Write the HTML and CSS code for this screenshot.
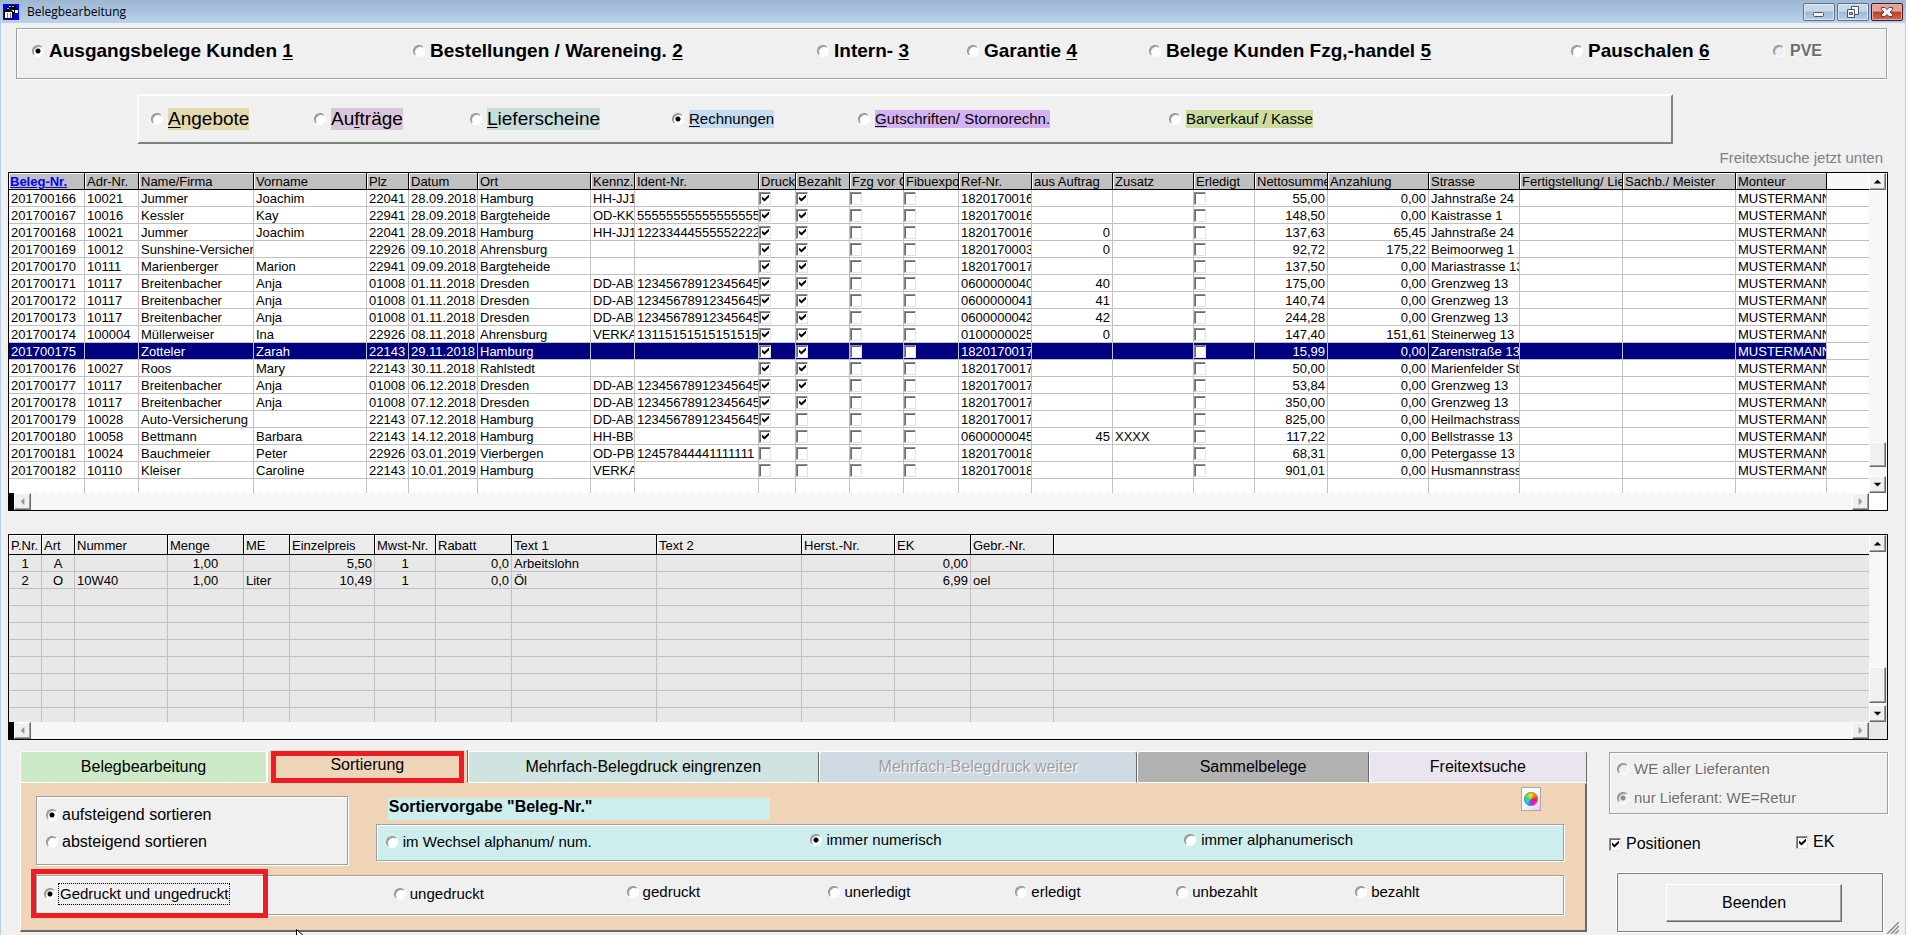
FILE: index.html
```html
<!DOCTYPE html>
<html lang="de">
<head>
<meta charset="utf-8">
<title>Belegbearbeitung</title>
<link rel="stylesheet" href="styles.css">
</head>
<body>
<div class="window">
  <header class="titlebar">
    <svg class="app-icon" viewBox="0 0 16 16" shape-rendering="crispEdges" aria-hidden="true">
      <rect width="16" height="16" fill="#0000ff"/>
      <path d="M4 2h2V1h6v1h1v2h2v2H9V5H6v2H2V4h2z" fill="#000"/>
      <path d="M6 2h2v1H6zM9 2h2v1H9zM4 4h2v1H4z" fill="#b0b0b0"/>
      <path d="M8 6h6v4H8z" fill="#000"/>
      <path d="M9 6h2v2H9zM12 6h3v3h-3z" fill="#fff"/>
      <path d="M1 7h9v8H1z" fill="#000"/>
      <path d="M2 8h7v6H2z" fill="#fff"/>
      <path d="M4 9h1v5H4zM7 9h1v5H7z" fill="#808080"/>
    </svg>
    <h1 class="title">Belegbearbeitung</h1>
    <div class="window-buttons">
      <button type="button" class="win-btn" aria-label="Minimieren">
        <svg viewBox="0 0 32 18"><rect x="10.500" y="9.500" width="10" height="4" rx="1" fill="#f4f4f4" stroke="#4e5666"/></svg>
      </button>
      <button type="button" class="win-btn" aria-label="Wiederherstellen">
        <svg viewBox="0 0 32 18"><path d="M14.500 3.500h7v8h-7z" fill="#f4f4f4" stroke="#4e5666"/><path d="M10.500 6.500h7v8h-7z" fill="#f4f4f4" stroke="#4e5666"/><path d="M12.500 9.500h3v2h-3z" fill="#9db8d4" stroke="#4e5666"/></svg>
      </button>
      <button type="button" class="win-btn win-close" aria-label="Schließen">
        <svg viewBox="0 0 32 18"><path d="M10.500 4.500h3.500l2 2 2-2h3.500v2L19 9l2.500 2.500v2H18l-2-2-2 2h-3.500v-2L13 9l-2.500-2.500z" fill="#f4f4f4" stroke="#5a4048"/></svg>
      </button>
    </div>
  </header>

  <fieldset class="etched kinds">
    <label class="opt"><input type="radio" name="kind" checked><span>Ausgangsbelege Kunden <u>1</u></span></label>
    <label class="opt"><input type="radio" name="kind"><span>Bestellungen / Wareneing. <u>2</u></span></label>
    <label class="opt"><input type="radio" name="kind"><span>Intern- <u>3</u></span></label>
    <label class="opt"><input type="radio" name="kind"><span>Garantie <u>4</u></span></label>
    <label class="opt"><input type="radio" name="kind"><span>Belege Kunden Fzg,-handel <u>5</u></span></label>
    <label class="opt"><input type="radio" name="kind"><span>Pauschalen <u>6</u></span></label>
    <label class="opt small off"><input type="radio" name="kind" disabled><span>PVE</span></label>
  </fieldset>

  <fieldset class="docs">
    <label class="opt big"><input type="radio" name="doc"><span class="tint-sand"><u>A</u>ngebote</span></label>
    <label class="opt big"><input type="radio" name="doc"><span class="tint-mauve">Au<u>f</u>träge</span></label>
    <label class="opt big"><input type="radio" name="doc"><span class="tint-teal"><u>L</u>ieferscheine</span></label>
    <label class="opt"><input type="radio" name="doc" checked><span class="tint-blue"><u>R</u>echnungen</span></label>
    <label class="opt"><input type="radio" name="doc"><span class="tint-violet"><u>G</u>utschriften/ Stornorechn.</span></label>
    <label class="opt"><input type="radio" name="doc"><span class="tint-green">Barverkauf / Kasse</span></label>
  </fieldset>

  <p class="hint">Freitextsuche jetzt unten</p>

  <section class="grid grid-docs" aria-label="Belege">
    <div class="grid-view"><table id="docs-table"></table></div>
    <div class="vscroll">
      <button type="button" class="arrow" aria-label="Nach oben"><svg viewBox="0 0 16 16"><path d="M4 10h8L8 6z"/></svg></button>
      <span class="track"></span><span class="thumb"></span><span class="track-end"></span>
      <button type="button" class="arrow" aria-label="Nach unten"><svg viewBox="0 0 16 16"><path d="M4 6h8l-4 4z"/></svg></button>
    </div>
    <div class="hscroll">
      <button type="button" class="arrow" aria-label="Nach links" disabled><svg viewBox="0 0 16 16"><path d="M10 4v8L6 8z"/></svg></button>
      <span class="track"></span>
      <button type="button" class="arrow" aria-label="Nach rechts" disabled><svg viewBox="0 0 16 16"><path d="M6 4v8l4-4z"/></svg></button>
    </div>
  </section>

  <section class="grid grid-items" aria-label="Positionen">
    <div class="grid-view"><table id="items-table"></table></div>
    <div class="vscroll">
      <button type="button" class="arrow" aria-label="Nach oben"><svg viewBox="0 0 16 16"><path d="M4 10h8L8 6z"/></svg></button>
      <span class="track"></span><span class="thumb"></span><span class="track-end"></span>
      <button type="button" class="arrow" aria-label="Nach unten"><svg viewBox="0 0 16 16"><path d="M4 6h8l-4 4z"/></svg></button>
    </div>
    <div class="hscroll">
      <button type="button" class="arrow" aria-label="Nach links" disabled><svg viewBox="0 0 16 16"><path d="M10 4v8L6 8z"/></svg></button>
      <span class="track"></span>
      <button type="button" class="arrow" aria-label="Nach rechts" disabled><svg viewBox="0 0 16 16"><path d="M6 4v8l4-4z"/></svg></button>
    </div>
  </section>

  <footer class="bottom">
    <section class="tabs">
      <div class="tab-row" role="tablist">
        <button type="button" role="tab" class="tab tab-edit">Belegbearbeitung</button>
        <button type="button" role="tab" class="tab tab-sort" aria-selected="true">Sortierung</button>
        <button type="button" role="tab" class="tab tab-limit">Mehrfach-Belegdruck eingrenzen</button>
        <button type="button" role="tab" class="tab tab-next" disabled>Mehrfach-Belegdruck weiter</button>
        <button type="button" role="tab" class="tab tab-collect">Sammelbelege</button>
        <button type="button" role="tab" class="tab tab-search">Freitextsuche</button>
      </div>
      <div class="tab-body" role="tabpanel">
        <div class="sort-area">
          <fieldset class="etched direction">
            <label class="opt"><input type="radio" name="dir" checked><span>aufsteigend sortieren</span></label>
            <label class="opt"><input type="radio" name="dir"><span>absteigend sortieren</span></label>
          </fieldset>
          <div class="preset">
            <div class="preset-head">
              <h2 class="preset-title">Sortiervorgabe "Beleg-Nr."</h2>
              <button type="button" class="color-btn" aria-label="Farbe wählen"><span class="wheel"></span></button>
            </div>
            <fieldset class="etched modes">
              <label class="opt low"><input type="radio" name="mode"><span>im Wechsel alphanum/ num.</span></label>
              <label class="opt"><input type="radio" name="mode" checked><span>immer numerisch</span></label>
              <label class="opt"><input type="radio" name="mode"><span>immer alphanumerisch</span></label>
            </fieldset>
          </div>
        </div>
        <fieldset class="etched states">
          <label class="opt low focus"><input type="radio" name="state" checked><span>Gedruckt und ungedruckt</span></label>
          <label class="opt low"><input type="radio" name="state"><span>ungedruckt</span></label>
          <label class="opt"><input type="radio" name="state"><span>gedruckt</span></label>
          <label class="opt"><input type="radio" name="state"><span>unerledigt</span></label>
          <label class="opt"><input type="radio" name="state"><span>erledigt</span></label>
          <label class="opt"><input type="radio" name="state"><span>unbezahlt</span></label>
          <label class="opt"><input type="radio" name="state"><span>bezahlt</span></label>
        </fieldset>
      </div>
      <svg class="pointer" viewBox="0 0 12 19" aria-hidden="true"><path d="M.5 .5v15l4-4 3 6 2-1-3-6h5z" fill="#fff" stroke="#000"/></svg>
    </section>

    <aside class="side">
      <fieldset class="etched suppliers">
        <label class="opt off"><input type="radio" name="sup" disabled><span>WE aller Lieferanten</span></label>
        <label class="opt off"><input type="radio" name="sup" disabled checked><span>nur Lieferant: WE=Retur</span></label>
      </fieldset>
      <div class="checks">
        <label class="opt"><input type="checkbox" checked><span>Positionen</span></label>
        <label class="opt high"><input type="checkbox" checked><span>EK</span></label>
      </div>
      <div class="exit"><button type="button" class="exit-btn">Beenden</button></div>
    </aside>
  </footer>
  <svg class="grip" viewBox="0 0 12 12" aria-hidden="true"><path d="M0 12L12 0M4 12l8-8M8 12l4-4" stroke="#8c8c8c" stroke-width="1.500"/></svg>
</div>
<script src="tables.js"></script>
</body>
</html>
```

FILE: styles.css
```css
*, *::before, *::after { box-sizing: border-box; }

body {
  margin: 0;
  background: #f0f0f0;
  color: #000;
  font: 16px/18px "Liberation Sans", Arial, sans-serif;
}

.window {
  position: relative;
  min-height: 100vh;
  overflow: hidden;
  box-shadow: inset 1px 0 #b4cfec, inset -1px 0 #b4cfec;
}

fieldset { margin: 0; padding: 0; border: 0; min-width: 0; }
h1, h2, p { margin: 0; font-weight: normal; }
button { font: inherit; color: inherit; padding: 0; }
svg { display: block; }
u { text-underline-offset: 2px; }

/* title bar */
.titlebar {
  display: flex;
  align-items: center;
  height: 23px;
  padding: 0 3px;
  background: linear-gradient(#9db7d3, #b8d2ec);
}
.app-icon { width: 16px; height: 16px; margin-right: 8px; }
.title { flex: 1; font: 12px/16px "Open Sans", "Noto Sans", sans-serif; }
.window-buttons { display: flex; gap: 2px; }
.win-btn {
  width: 32px;
  height: 18px;
  border: 1px solid #5b7188;
  border-radius: 2px;
  background: linear-gradient(#c6d8ea 45%, #9fb9d4 50%, #b5cee8);
  box-shadow: inset 0 0 0 1px #dce8f4;
}
.win-btn svg { margin: -1px; width: 32px; height: 18px; }
.win-close {
  border-color: #43141a;
  background: linear-gradient(#e2a294 45%, #c03a24 50%, #cf6a50);
  box-shadow: inset 0 0 0 1px #e8b0a4;
}

/* radio and check boxes */
.opt { display: flex; align-items: center; gap: 5px; white-space: nowrap; }
.opt.off { color: #6d6d6d; text-shadow: 1px 1px #fff; }
input[type="radio"] {
  appearance: none;
  flex: none;
  width: 12px;
  height: 12px;
  margin: 0;
  border: 1px solid;
  border-color: #8c8c8c #fff #fff #8c8c8c;
  border-radius: 50%;
  background: #fff;
  box-shadow: inset 1px 1px #9a9a9a;
}
input[type="radio"]:checked { background: radial-gradient(circle, #000 2px, #fff 3px); }
input[type="radio"]:disabled { background: #f0f0f0; }
input[type="radio"]:disabled:checked { background: radial-gradient(circle, #8c8c8c 2px, #f0f0f0 3px); }

input[type="checkbox"] {
  appearance: none;
  display: block;
  flex: none;
  width: 12px;
  height: 13px;
  margin: 0;
  border: 1px solid;
  border-color: #8c8c8c #e3e3e3 #e3e3e3 #8c8c8c;
  background: #fff;
  box-shadow: inset 1px 1px #696969;
}
input[type="checkbox"]:checked::before {
  content: "";
  display: block;
  width: 7px;
  height: 7px;
  margin: 2px 0 0 2px;
  background: #000;
  clip-path: polygon(0 30%, 35% 62%, 100% 0, 100% 38%, 35% 100%, 0 68%);
}

.etched {
  border: 1px solid #a0a0a0;
  box-shadow: 1px 1px #fff, inset 1px 1px #fff;
}

/* document kinds */
.kinds {
  display: grid;
  grid-template-columns: 381fr 404fr 150fr 182fr 422fr 202fr 113fr;
  align-items: center;
  height: 51px;
  margin: 5px 19px 0 16px;
  padding: 0 0 5px 15px;
  font-size: 19px;
  line-height: 22px;
  font-weight: bold;
}
.kinds .small { font-size: 16px; }

.docs {
  display: grid;
  grid-template-columns: 163fr 156fr 202fr 186fr 311fr 502fr;
  align-items: center;
  height: 50px;
  margin: 15px 233px 0 137px;
  padding: 0 0 0 12px;
  border: 2px solid;
  border-color: #fff #808080 #808080 #fff;
  font-size: 15px;
}
.docs .big { font-size: 19px; line-height: 22px; }
.tint-sand { background: #e4dab0; }
.tint-mauve { background: #dac6dc; }
.tint-teal { background: #c8dcda; }
.tint-blue { background: #c4dbf0; }
.tint-violet { background: #d2b2f4; }
.tint-green { background: #cbdc9c; }

.hint {
  padding-right: 23px;
  color: #808080;
  font-size: 15px;
  line-height: 28px;
  text-align: right;
}

/* data grids */
.grid {
  display: grid;
  grid-template-columns: 1fr 18px;
  grid-template-rows: auto 17px;
  margin: 0 18px 23px 8px;
  border: 1px solid #000;
  font-size: 13px;
  line-height: 14px;
}
.grid-view { overflow: hidden; }
.grid table { width: 100%; table-layout: fixed; border-spacing: 0; border-collapse: separate; }
.grid th, .grid td {
  height: 17px;
  padding: 2px 2px 0;
  overflow: hidden;
  white-space: nowrap;
  text-align: left;
  font-weight: normal;
  border: 0 solid #c0c0c0;
  border-width: 0 1px 1px 0;
}
.grid th { border-color: #000; box-shadow: inset 1px 1px #fff; }
.grid th:last-child, .grid td:last-child { border-right: 0; }
.grid .num { text-align: right; }
.grid .mid { text-align: center; }
.grid td.box { padding: 0; }
.grid th.sorted { padding-left: 1px; font-weight: bold; color: #0000ff; text-decoration: underline; }

.grid-docs { background: #fff; }
.grid-docs .grid-view { height: 320px; }
.grid-docs th { background: #c0c0c0; }
.grid-docs th:last-child { background: #f8f8f8; }
.grid-docs tr.selected td:not(:last-child) { background: #000080; color: #fff; }

.grid-items { background: #e8e8e8; margin-bottom: 9px; }
.grid-items .grid-view { height: 187px; }
.grid-items th { height: 20px; padding-top: 3px; background: #ebebeb; }
.grid-items th:last-child { background: #f0f0f0; }

.track, .track-end {
  background: repeating-conic-gradient(#fff 0 25%, #f0f0f0 0 50%) 0 0 / 2px 2px;
}
.track { flex: 1; }
.track-end { height: 9px; }
.grid-items .track-end { height: 2px; }
.vscroll { display: flex; flex-direction: column; padding-right: 1px; }
.hscroll { display: flex; border-left: 5px solid #000; }
.arrow, .thumb {
  border: 1px solid;
  border-color: #fff #696969 #696969 #fff;
  background: #f0f0f0;
  box-shadow: inset -1px -1px #a0a0a0;
}
.arrow { width: 17px; height: 17px; }
.arrow svg { width: 15px; height: 15px; }
.arrow:disabled svg { fill: #9a9a9a; }
.thumb { height: 25px; }
.grid-items .thumb { height: 36px; }

/* lower area */
.bottom {
  display: grid;
  grid-template-columns: 1fr 279px;
  gap: 22px;
  margin: 0 18px 0 20px;
}
.tabs { position: relative; }
.tab-row { display: flex; align-items: flex-end; height: 34px; }
.tab {
  flex: 1;
  height: 32px;
  border: 1px solid;
  border-color: #fff #696969 #fff #fff;
  border-radius: 3px 3px 0 0;
}
.tab-edit { flex: 247; background: #cdeac8; border-right-color: #fff; }
.tab-sort {
  position: relative;
  flex: 200;
  height: 34px;
  padding-bottom: 2px;
  background: #f0d4b8;
  border-bottom-color: #f0d4b8;
}
.tab-sort::after {
  content: "";
  position: absolute;
  inset: 1px 3px -1px 3px;
  border: 5px solid #ee1c24;
}
.tab-limit { flex: 352; background: #cfe3e1; }
.tab-next { flex: 319; background: #cfdae3; color: #a0a0a0; text-shadow: 1px 1px #fff; }
.tab-collect { flex: 231; background: #b2b2b2; }
.tab-search { flex: 218; background: #e9e4ee; }

.tab-body {
  height: 149px;
  padding: 3px 21px 0 15px;
  background: #f0d4b8;
  border: 1px solid;
  border-color: #f0d4b8 #696969 #696969 #fff;
  border-bottom-width: 2px;
  border-right-width: 2px;
}
.sort-area { display: grid; grid-template-columns: 312fr 1189fr; gap: 28px; }
.direction {
  display: flex;
  flex-direction: column;
  gap: 9px;
  height: 69px;
  margin-top: 9px;
  padding: 9px 0 0 9px;
  background: #f0f0f0;
}
.direction .opt, .states .opt { gap: 4px; }
.preset-head { display: flex; justify-content: space-between; height: 37px; padding: 0 23px 0 12px; }
.preset-title {
  width: 382px;
  height: 22px;
  margin-top: 11px;
  padding-left: 1px;
  background: #cdeeed;
  font-size: 16px;
  font-weight: bold;
}
.color-btn {
  display: grid;
  place-items: center;
  width: 20px;
  height: 24px;
  border: 1px solid #a9a9a9;
  background: linear-gradient(135deg, #fff, #eef6f4 60%, #f6c4e4);
}
.wheel {
  width: 14px;
  height: 14px;
  border-radius: 50%;
  background: conic-gradient(#ffe600, #ff2020 90deg, #ff00e0 150deg, #7a50ff 190deg, #00d8ff 230deg, #30e860 290deg, #ffe600);
  box-shadow: inset 0 0 1px 1px #8a8a8a;
}
.modes {
  display: grid;
  grid-template-columns: 424fr 375fr 379fr;
  align-items: start;
  height: 37px;
  padding: 6px 0 0 9px;
  background: #cdeeed;
  font-size: 15px;
}
.low { padding-top: 2px; }
.states {
  position: relative;
  display: grid;
  grid-template-columns: 350fr 233fr 202fr 187fr 161fr 179fr 208fr;
  align-items: start;
  height: 40px;
  margin-top: 10px;
  padding: 7px 0 0 7px;
  background: #f0f0f0;
  font-size: 15px;
}
.states::after {
  content: "";
  position: absolute;
  inset: -7px auto -4px -6px;
  width: 237px;
  border: 5px solid #ee1c24;
}
.states .focus span { outline: 1px dotted #000; outline-offset: 1px; }

.pointer { position: absolute; left: 276px; top: 180px; width: 12px; height: 19px; }

.side { padding-top: 3px; }
.suppliers {
  display: flex;
  flex-direction: column;
  gap: 11px;
  height: 62px;
  padding: 7px 0 0 7px;
  font-size: 15px;
}
.checks {
  display: grid;
  grid-template-columns: 187fr 92fr;
  align-items: start;
  padding: 19px 0;
}
.checks .opt { padding-top: 2px; }
.checks .high { padding-top: 0; }
.exit {
  display: grid;
  place-items: center;
  height: 59px;
  margin: 1px 5px 0 8px;
  padding: 0 12px 0 20px;
  border: 1px solid #808080;
  box-shadow: 1px 1px #fff, -1px -1px #fff;
}
.exit-btn {
  width: 176px;
  height: 38px;
  border: 1px solid;
  border-color: #fff #696969 #696969 #fff;
  background: #f0f0f0;
  box-shadow: inset -1px -1px #a0a0a0;
}
.grip { position: absolute; right: 7px; bottom: 1px; width: 12px; height: 12px; }
```

FILE: tables.js
```js
const docColumns = [
  ["Beleg-Nr.", 76, "sorted"], ["Adr-Nr.", 54], ["Name/Firma", 115], ["Vorname", 113],
  ["Plz", 42], ["Datum", 69], ["Ort", 113], ["Kennz.", 44], ["Ident-Nr.", 124],
  ["Druck", 37, "box"], ["Bezahlt", 54, "box"], ["Fzg vor Ort", 54, "box"], ["Fibuexport", 55, "box"],
  ["Ref-Nr.", 73], ["aus Auftrag", 81, "num"], ["Zusatz", 81], ["Erledigt", 61, "box"],
  ["Nettosumme", 73, "num"], ["Anzahlung", 101, "num"], ["Strasse", 91],
  ["Fertigstellung/ Lieferung", 103], ["Sachb./ Meister", 113], ["Monteur", 91]
];

// number | address | name | first name | zip | date | city | plate | ident | printed+paid | ref | order | extra | net | deposit | street
const docRows = `
201700166|10021|Jummer|Joachim|22041|28.09.2018|Hamburg|HH-JJ1||11|1820170016|||55,00|0,00|Jahnstraße 24
201700167|10016|Kessler|Kay|22941|28.09.2018|Bargteheide|OD-KK|55555555555555555|11|1820170016|||148,50|0,00|Kaistrasse 1
201700168|10021|Jummer|Joachim|22041|28.09.2018|Hamburg|HH-JJ1|12233444555552222|11|1820170016|0||137,63|65,45|Jahnstraße 24
201700169|10012|Sunshine-Versicherung||22926|09.10.2018|Ahrensburg|||11|1820170003|0||92,72|175,22|Beimoorweg 1
201700170|10111|Marienberger|Marion|22941|09.09.2018|Bargteheide|||11|1820170017|||137,50|0,00|Mariastrasse 13
201700171|10117|Breitenbacher|Anja|01008|01.11.2018|Dresden|DD-AB|12345678912345645|11|0600000040|40||175,00|0,00|Grenzweg 13
201700172|10117|Breitenbacher|Anja|01008|01.11.2018|Dresden|DD-AB|12345678912345645|11|0600000041|41||140,74|0,00|Grenzweg 13
201700173|10117|Breitenbacher|Anja|01008|01.11.2018|Dresden|DD-AB|12345678912345645|11|0600000042|42||244,28|0,00|Grenzweg 13
201700174|100004|Müllerweiser|Ina|22926|08.11.2018|Ahrensburg|VERKA|13115151515151515|11|0100000025|0||147,40|151,61|Steinerweg 13
201700175||Zotteler|Zarah|22143|29.11.2018|Hamburg|||11|1820170017|||15,99|0,00|Zarenstraße 13
201700176|10027|Roos|Mary|22143|30.11.2018|Rahlstedt|||11|1820170017|||50,00|0,00|Marienfelder Str
201700177|10117|Breitenbacher|Anja|01008|06.12.2018|Dresden|DD-AB|12345678912345645|11|1820170017|||53,84|0,00|Grenzweg 13
201700178|10117|Breitenbacher|Anja|01008|07.12.2018|Dresden|DD-AB|12345678912345645|11|1820170017|||350,00|0,00|Grenzweg 13
201700179|10028|Auto-Versicherung||22143|07.12.2018|Hamburg|DD-AB|12345678912345645|10|1820170017|||825,00|0,00|Heilmachstrasse
201700180|10058|Bettmann|Barbara|22143|14.12.2018|Hamburg|HH-BB||10|0600000045|45|XXXX|117,22|0,00|Bellstrasse 13
201700181|10024|Bauchmeier|Peter|22926|03.01.2019|Vierbergen|OD-PB|12457844441111111|00|1820170018|||68,31|0,00|Petergasse 13
201700182|10110|Kleiser|Caroline|22143|10.01.2019|Hamburg|VERKA||00|1820170018|||901,01|0,00|Husmannstrasse
`.trim().split("\n").map((line) => {
  const f = line.split("|");
  return [...f.slice(0, 9), f[9][0] === "1", f[9][1] === "1", false, false,
    ...f.slice(10, 13), false, ...f.slice(13, 16), "", "", "MUSTERMANN"];
});

const itemColumns = [
  ["P.Nr.", 33, "mid"], ["Art", 33, "mid"], ["Nummer", 93], ["Menge", 76, "mid"], ["ME", 46],
  ["Einzelpreis", 85, "num"], ["Mwst-Nr.", 61, "mid"], ["Rabatt", 76, "num"], ["Text 1", 145],
  ["Text 2", 145], ["Herst.-Nr.", 93], ["EK", 76, "num"], ["Gebr.-Nr.", 83]
];
const itemRows = [
  ["1", "A", "", "1,00", "", "5,50", "1", "0,0", "Arbeitslohn", "", "", "0,00", ""],
  ["2", "O", "10W40", "1,00", "Liter", "10,49", "1", "0,0", "Öl", "", "", "6,99", "oel"]
];

function fillTable(table, columns, rows, emptyRows, selected) {
  const group = document.createElement("colgroup");
  for (const [, width] of columns) {
    const col = document.createElement("col");
    col.style.width = width + "px";
    group.append(col);
  }
  group.append(document.createElement("col"));
  table.append(group);

  const head = table.createTHead().insertRow();
  for (const [label, , kind] of [...columns, [""]]) {
    const th = document.createElement("th");
    th.scope = "col";
    th.textContent = label;
    if (kind === "sorted") th.className = kind;
    head.append(th);
  }

  const body = table.createTBody();
  const blank = Array.from({ length: emptyRows }, () => columns.map(() => ""));
  [...rows, ...blank].forEach((values) => {
    const row = body.insertRow();
    if (values[0] && values[0] === selected) row.className = "selected";
    values.forEach((value, i) => {
      const cell = row.insertCell();
      const kind = columns[i][2];
      if (kind && kind !== "sorted") cell.className = kind;
      if (typeof value === "boolean") {
        const box = document.createElement("input");
        box.type = "checkbox";
        box.checked = value;
        box.setAttribute("aria-label", columns[i][0]);
        cell.append(box);
      } else {
        cell.textContent = value;
      }
    });
    row.insertCell();
  });
}

fillTable(document.getElementById("docs-table"), docColumns, docRows, 1, "201700175");
fillTable(document.getElementById("items-table"), itemColumns, itemRows, 8);
```
